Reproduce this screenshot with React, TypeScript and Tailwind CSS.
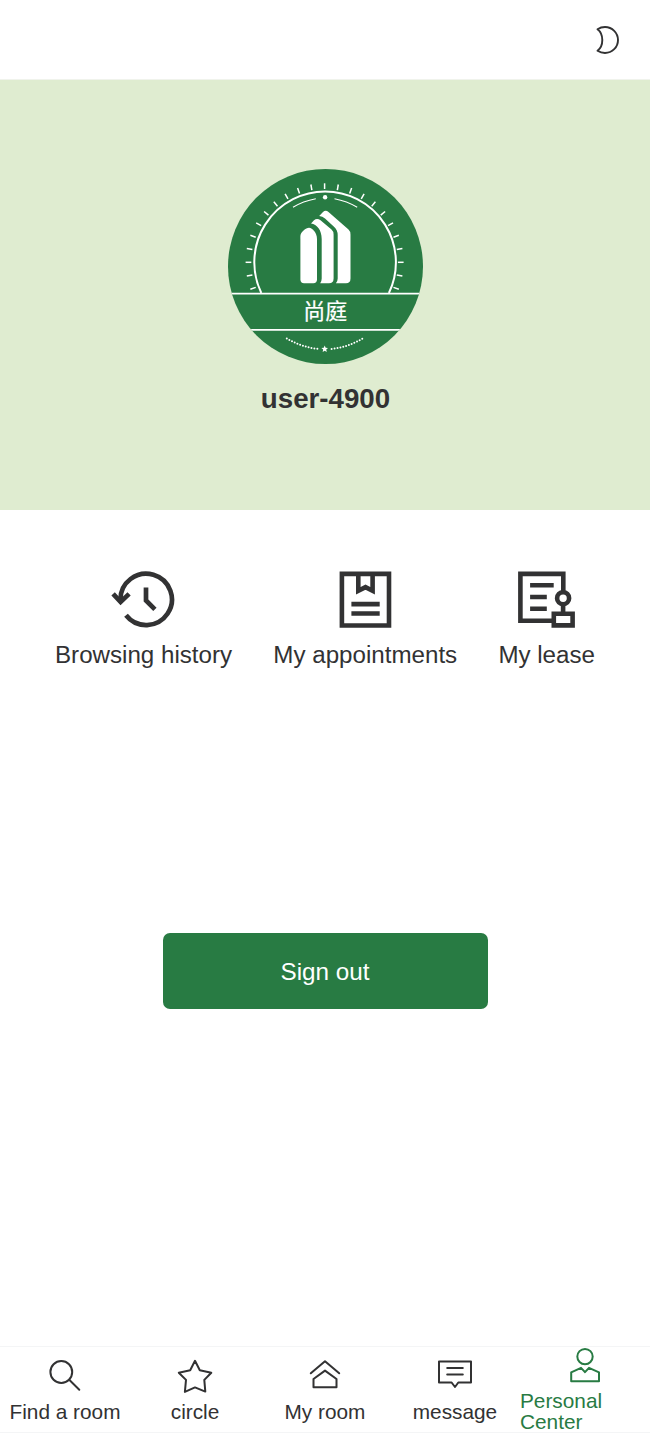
import type { ReactNode } from "react";

const range = (n: number) => Array.from({ length: n }, (_, i) => i);

function Moon() {
  return (
    <svg className="h-[30px] w-[26px]" viewBox="595 25 26 30" fill="none" stroke="#323233" strokeWidth="1.9" strokeLinejoin="round">
      <path d="M597.5 29.2C599.7 27.8 602.3 27 605 27C612.2 27 618 32.8 618 40S612.2 53 605 53C602.3 53 599.7 52.2 597.5 50.8C600.6 48.5 602.3 44.5 602.3 40S600.6 31.500 597.500 29.200Z" />
    </svg>
  );
}

function Logo() {
  return (
    <svg className="h-[195px] w-[195px]" viewBox="228 169 195 195" fill="none" stroke="#fff">
      <defs>
        <clipPath id="disc">
          <circle cx="325.500" cy="266.500" r="97.500" />
        </clipPath>
      </defs>
      <circle cx="325.500" cy="266.500" r="97.500" fill="#287b43" stroke="none" />
      {range(23).map((i) => (
        <path key={i} d="M324.600 183.300V189" strokeWidth="1.500" transform={`rotate(${(i - 11) * 10} 324.600 262.300)`} />
      ))}
      <path d="M261.300 293A70.800 70.800 0 1 1 388.900 293" strokeWidth="2" />
      <path d="M293 207.300Q303 201.200 315.800 198.800M334.500 198.800Q347 201.200 357.200 207.300" strokeWidth="1.100" />
      <circle cx="325.100" cy="197.300" r="2.200" fill="#fff" stroke="none" />
      <g fill="#fff" stroke="none">
        <path d="M300.400 236C300.400 232 306 227.700 309 227.700C312.500 227.700 317 233 317 239V279.500Q317 283.200 313.300 283.200H304Q300.400 283.200 300.400 279.500Z" />
        <path d="M311 223.500L314 220.300Q317 217.900 320.500 220.300L331.500 229.500Q333.600 231.300 333.600 234.500V278.500Q333.600 283.200 329 283.200H320.200Q321.700 281.200 321.700 278.500V239C321.700 230 317 224.300 311 223.500Z" />
        <path d="M319.200 216L323 212Q325.500 209.700 328.500 212L348.500 229.500Q350.500 231.300 350.500 234.500V278.500Q350.500 283.200 346 283.200H335.900Q337.700 281.200 337.700 278.500V235Q337.700 230 334 226.700L325 218.500Q322.500 216.200 319.200 216Z" />
      </g>
      <path d="M228 293.700H423M228 329.900H423" strokeWidth="1.700" clipPath="url(#disc)" />
      <text x="325.300" y="319.200" textAnchor="middle" fontSize="22" fill="#fff" strokeWidth="0.200" className="font-['Noto_Sans_CJK_SC',sans-serif]">
        尚庭
      </text>
      <path d="M286.800 338.500Q301 347 318 348.900M331.600 348.900Q348.500 347 362.800 338.500" strokeWidth="2" strokeLinecap="round" strokeDasharray="0 2.950" />
      <path fill="#fff" stroke="none" d="M324.700 345.600l.95 2.150 2.350.25-1.750 1.600.5 2.300-2.050-1.200-2.050 1.200.5-2.300-1.750-1.600 2.350-.25z" />
    </svg>
  );
}

function HistoryIcon() {
  return (
    <svg className="h-[60px] w-[66px]" viewBox="110.800 569 66 60" fill="none" stroke="#323233" strokeWidth="4.700">
      <path d="M120.300 600A25.700 25.700 0 1 1 125.800 615.300" />
      <path d="M112.900 593.900L120.400 601.900L128.900 593.900M145.800 587.500V600.500L154.700 609.400" />
      <path fill="#323233" stroke="none" d="M117 599L124 598.500L120.400 605Z" />
    </svg>
  );
}

function AppointmentIcon() {
  return (
    <svg className="h-[60px] w-[56px]" viewBox="337 569 56 60" fill="none" stroke="#323233" strokeWidth="4.600">
      <path d="M341.900 573.900H389V625.500H341.900ZM351.400 604.100H379.700M351.400 613.500H379.700M358.300 574V590.700L365.500 587.100L372.600 590.700V574" />
    </svg>
  );
}

function LeaseIcon() {
  return (
    <svg className="h-[60px] w-[60px]" viewBox="516.900 569 60 60" fill="none" stroke="#323233" strokeWidth="4.600">
      <path d="M563.200 592V573.900H520.300V620.700H553M530 585.300H553.600M530 597H546.700M530 608.700H546.700M563 605V613" />
      <circle cx="563" cy="598.200" r="6" />
      <path d="M553.700 613.700H572.500V625.400H553.700Z" />
    </svg>
  );
}

const actions: { label: string; icon: ReactNode }[] = [
  { label: "Browsing history", icon: <HistoryIcon /> },
  { label: "My appointments", icon: <AppointmentIcon /> },
  { label: "My lease", icon: <LeaseIcon /> },
];

function TabIcon({ children }: { children: ReactNode }) {
  return (
    <svg className="h-[38px] w-[38px] shrink-0" viewBox="0 0 38 38" fill="none" stroke="currentColor" strokeWidth="2" strokeLinejoin="round" strokeLinecap="round">
      {children}
    </svg>
  );
}

const tabs: { label: string; active?: boolean; icon: ReactNode }[] = [
  { label: "Find a room", icon: <><circle cx="15.300" cy="15" r="10.900" /><path d="M23.200 22.800L33.300 32.800" /></> },
  { label: "circle", icon: <path d="M19 3.800L23.800 13.300L35.300 15.700L28.300 22.900L29.300 34.600L19 30.400L8.900 34.900L10 22.900L2.800 15.700L14.200 13.300Z" /> },
  { label: "My room", icon: <path d="M4.800 16.300L19 4.200L33.200 16.300M7.500 22L19 13.600L30.500 22V30.200H7.500Z" /> },
  { label: "message", icon: <path d="M3 4.500H35V25.500H22.300L19 30L15.600 25.500H3ZM11.200 11.100H26.800M11.200 17.400H26.800" /> },
  { label: "Personal Center", active: true, icon: <><circle cx="19" cy="10.600" r="7.700" /><path d="M15 21.800L5.200 26.300V35.200H33V26.300L23 21.800L19 26.200Z" /></> },
];

export default function App() {
  return (
    <div className="flex h-[1433px] w-full flex-col bg-white font-['Liberation_Sans',Arial,sans-serif] text-[#323233]">
      <header className="flex h-20 shrink-0 items-center justify-end border-b border-[#f0f3ec] pr-[29px]">
        <Moon />
      </header>

      <section className="flex h-[430px] shrink-0 flex-col items-center bg-[#dfecd0] pt-[89px]">
        <Logo />
        <h1 className="mt-[19px] pl-px text-[27.700px] leading-8 font-bold">user-4900</h1>
      </section>

      <main className="flex flex-1 flex-col items-center">
        <div className="flex w-full justify-between pr-[55px] pl-[55px] pt-[59px]">
          {actions.map(({ label, icon }) => (
            <button key={label} className="flex flex-col items-center">
              {icon}
              <span className="mt-[11px] text-[24.150px] leading-[30px] whitespace-nowrap">{label}</span>
            </button>
          ))}
        </div>
        <button className="mt-[263px] h-[76px] w-[325px] rounded-[7px] bg-[#287b43] pt-[2px] text-[24.270px] text-white">Sign out</button>
      </main>

      <nav className="grid h-[87px] shrink-0 grid-cols-5 grid-rows-[85px] border-y border-[#f4f5f6]">
        {tabs.map(({ label, active, icon }) => (
          <button key={label} className={active ? "flex h-[85px] flex-col items-center justify-center text-left text-[#287b43]" : "flex h-[85px] flex-col items-center justify-center pt-[1.600px]"}>
            <TabIcon>{icon}</TabIcon>
            <span className="mt-[7px] text-[20.800px] leading-[20.800px]">{label}</span>
          </button>
        ))}
      </nav>
    </div>
  );
}
